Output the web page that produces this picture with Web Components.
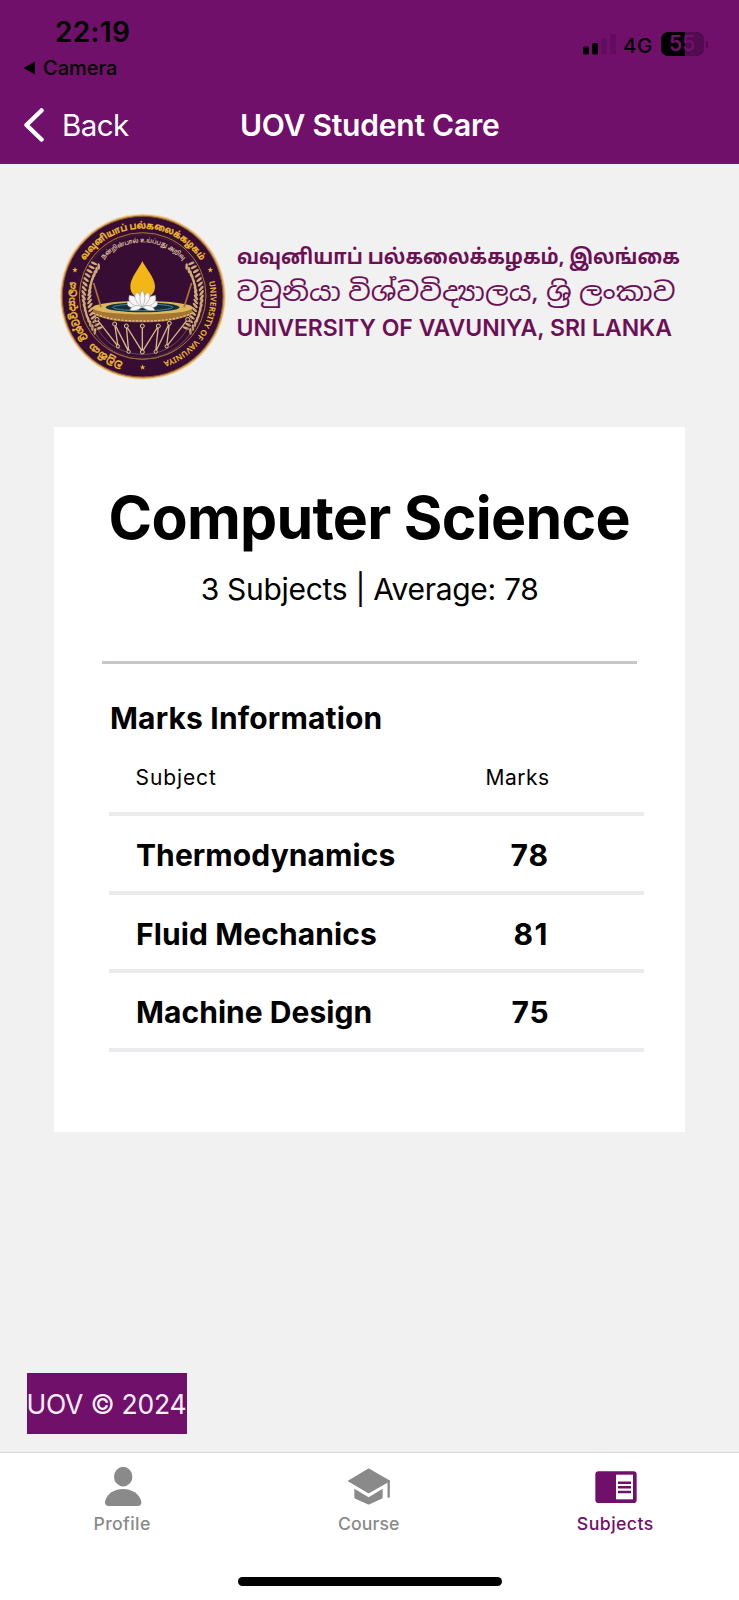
<!DOCTYPE html>
<html lang="en">
<head>
<meta charset="utf-8">
<title>UOV Student Care</title>
<style>
html,body{margin:0;padding:0}
body{background:#f1f1f1;font-family:Inter,"Liberation Sans",sans-serif;color:#000}
</style>
</head>
<body>
<app-screen>
  <app-header slot="header"></app-header>
  <uni-brand></uni-brand>
  <course-card>
    <fit-text slot="title" w="518" size="59" weight="700" lh="71">Computer Science</fit-text>
    <fit-text slot="summary" w="335.5" size="30" weight="400" lh="36">3 Subjects | Average: 78</fit-text>
    <fit-text slot="section" w="269.5" size="30" weight="700" lh="36">Marks Information</fit-text>
    <mark-row head style="height:80px">
      <fit-text w="79.5" size="21" weight="400" lh="26">Subject</fit-text>
      <fit-text slot="mark" w="62.5" size="21" weight="400" lh="26">Marks</fit-text>
    </mark-row>
    <mark-row style="height:79px">
      <fit-text w="257.5" size="30" weight="700" lh="36">Thermodynamics</fit-text>
      <fit-text slot="mark" w="36" size="30" weight="700" lh="36">78</fit-text>
    </mark-row>
    <mark-row style="height:78px">
      <fit-text w="239" size="30" weight="700" lh="36">Fluid Mechanics</fit-text>
      <fit-text slot="mark" w="31" size="30" weight="700" lh="36" style="margin-right:2px">81</fit-text>
    </mark-row>
    <mark-row style="height:79px">
      <fit-text w="233.5" size="30" weight="700" lh="36">Machine Design</fit-text>
      <fit-text slot="mark" w="35" size="30" weight="700" lh="36">75</fit-text>
    </mark-row>
  </course-card>
  <copy-badge slot="footer"><fit-text w="157" size="26.5" weight="400" lh="32">UOV © 2024</fit-text></copy-badge>
  <tab-bar slot="tabs">
    <tab-item>
      <svg slot="icon" width="42" height="42" viewBox="306 345 126 126" fill="#8a8a8a"><ellipse cx="369.500" cy="380" rx="27.500" ry="29.500"/><path d="M326 468c-8 0-12-5-11-12 4-25 29-39 54-39s51 14 55 39c1 7-3 12-11 12z"/></svg>
      <fit-text w="55.500" size="17.700" weight="500" lh="22">Profile</fit-text>
    </tab-item>
    <tab-item>
      <svg slot="icon" width="42" height="42" viewBox="86 105 126 126" fill="#8a8a8a" stroke="#8a8a8a" stroke-linejoin="round"><path stroke-width="4" d="M88 153 148 117 210 153 148 188z"/><path stroke="none" d="M105 176 148 202 190 176V202Q190 205 187 206L151 223Q148 224 145 223L108 206Q105 204 105 201z"/><path fill="none" stroke-width="7" stroke-linecap="round" d="M208 154V200"/></svg>
      <fit-text w="61" size="17.700" weight="500" lh="22">Course</fit-text>
    </tab-item>
    <tab-item active>
      <svg slot="icon" width="42" height="42" viewBox="824 107 126 126"><rect x="825" y="126" width="124" height="95" rx="10" fill="#70106b"/><path fill="#fff" d="M887 136h51v74h-51z"/><path stroke="#70106b" stroke-width="7.500" d="M893 160h39M893 174h39M893 188h39"/></svg>
      <fit-text w="76" size="17.700" weight="500" lh="22">Subjects</fit-text>
    </tab-item>
  </tab-bar>
</app-screen>
<script>
const define = (name, html, setup) => {
  const t = document.createElement('template');
  t.innerHTML = html;
  customElements.define(name, class extends HTMLElement {
    constructor() {
      super();
      this.attachShadow({mode: 'open'}).append(t.content.cloneNode(true));
    }
    connectedCallback() { if (setup) setup(this, this.shadowRoot); }
  });
};

/* Text whose tracking is chosen so the visible glyphs span a given width. */
const ctx = document.createElement('canvas').getContext('2d');
define('fit-text', `<style>:host{display:block;white-space:nowrap;flex:none}span{display:block}</style><span><slot></slot></span>`, (el, root) => {
  const a = n => +el.getAttribute(n), s = root.querySelector('span'), txt = el.textContent;
  ctx.font = `${a('weight')} ${a('size')}px Inter, "Liberation Sans", sans-serif`;
  const m = ctx.measureText(txt);
  const ink = m.actualBoundingBoxRight + m.actualBoundingBoxLeft;
  el.style.width = a('w') + 'px';
  s.style.cssText = `font:${a('weight')} ${a('size')}px/${a('lh')}px Inter,"Liberation Sans",sans-serif;letter-spacing:${(a('w') - ink) / (txt.length - 1)}px;margin-left:${m.actualBoundingBoxLeft}px`;
});

define('app-screen', `<style>
:host{display:flex;flex-direction:column;height:1600px;width:739px;overflow:hidden;background:#f1f1f1}
main{flex:1}
</style><slot name="header"></slot><main><slot></slot></main><slot name="footer"></slot><slot name="tabs"></slot>`);

define('signal-bars', `<style>:host{display:block;height:24px}svg{display:block}</style>
<svg width="33" height="24" viewBox="583 32 33 24"><rect x="583" y="46.500" width="6" height="8" rx="1.500"/><rect x="592" y="43" width="6" height="11.500" rx="1.500"/><g fill="#610c60"><rect x="601" y="38.500" width="6" height="16" rx="1.500"/><rect x="610" y="34" width="6" height="20.500" rx="1.500"/></g></svg>`);

define('battery-level', `<style>
:host{display:flex;align-items:center;gap:1.500px}
.cell{width:43px;height:24px;border-radius:7px;background:linear-gradient(90deg,#000 24px,#520a51 24px);display:flex;align-items:center;justify-content:center;color:#70106b}
.nub{width:2.500px;height:7px;border-radius:0 3px 3px 0;background:#520a51}
</style><div class="cell"><fit-text w="25" size="21" weight="600" lh="24">55</fit-text></div><div class="nub"></div>`);

define('app-header', `<style>
:host{display:block;height:164px;background:#70106b}
.status{display:flex;justify-content:space-between;height:95px;box-sizing:border-box;padding:15px 31px 0 23px}
.time{padding-left:33px}
.from{display:flex;align-items:center;gap:9px;margin-top:7px}
.radio{display:flex;align-items:center;height:24px;margin-top:17px}
.radio signal-bars{margin-right:8px}.radio fit-text{margin:3px 9px 0 0}
nav{display:grid;grid-template-columns:1fr auto 1fr;align-items:center;height:60px;padding:0 24px;color:#fff}
.back{display:flex;align-items:center;gap:20px}
.title{margin-left:2px}
svg{display:block}
</style>
<div class="status"><div><fit-text class="time" w="73" size="28" weight="600" lh="34">22:19</fit-text>
<div class="from"><svg width="12" height="14" viewBox="0 0 12 14"><path d="M.5 7 12 .5v13z"/></svg><fit-text w="72" size="20" weight="500" lh="24">Camera</fit-text></div></div>
<div class="radio"><signal-bars></signal-bars><fit-text w="28" size="20.500" weight="500" lh="24">4G</fit-text><battery-level></battery-level></div></div>
<nav><div class="back"><svg width="20" height="34" viewBox="0 0 20 34"><path fill="none" stroke="#fff" stroke-width="4.500" stroke-linecap="round" stroke-linejoin="round" d="M17.500 2.500 2.500 17l15 14.500"/></svg><fit-text w="65" size="29.500" weight="400" lh="36">Back</fit-text></div><fit-text class="title" w="257" size="30" weight="600" lh="36">UOV Student Care</fit-text></nav>`);

define('uni-emblem', `<style>:host{display:block;flex:none}svg{display:block}text{font-family:"Noto Sans Tamil","Noto Sans Sinhala",Inter,"Noto Sans",sans-serif}</style>
<svg width="168" height="167" viewBox="27 24 504 501">
<defs><path id="outer" d="M278 479a204 204 0 0 1 0-408a204 204 0 0 1 0 408"/><path id="inner" d="M278 438a163 163 0 0 1 0-326a163 163 0 0 1 0 326"/></defs>
<circle cx="278.500" cy="275" r="249" fill="#f0d6ac"/><circle cx="278.500" cy="275" r="246" fill="#d9a258"/><circle cx="278" cy="275" r="241" fill="#380d33" stroke="#8a5a2b" stroke-width="3"/>
<circle cx="278" cy="273" r="190" fill="none" stroke="#ad7b31" stroke-width="3"/>
<circle cx="278" cy="273" r="184" fill="none" stroke="#4f2636" stroke-width="2"/>
<g fill="#eebb2e" stroke="#eebb2e" stroke-width=".8" font-weight="700">
<text font-size="30"><textPath href="#outer" startOffset="59" textLength="110" lengthAdjust="spacingAndGlyphs">වවුනියා</textPath></text>
<text font-size="30"><textPath href="#outer" startOffset="188" textLength="176" lengthAdjust="spacingAndGlyphs">විශ්වවිද්‍යාලය</textPath></text>
<text font-size="28"><textPath href="#outer" startOffset="434" textLength="414" lengthAdjust="spacingAndGlyphs">வவுனியாப் பல்கலைக்கழகம்</textPath></text>
<text font-size="24" font-weight="600" stroke-width=".3"><textPath href="#outer" startOffset="915" textLength="304" lengthAdjust="spacingAndGlyphs">UNIVERSITY OF VAVUNIYA</textPath></text></g>
<text font-size="19" font-weight="600" fill="#e3cfa4"><textPath href="#inner" startOffset="380" textLength="268" lengthAdjust="spacingAndGlyphs">நன்றின்பால் உய்ப்பது அறிவு</textPath></text>
<g id="stars" fill="#f0b52c"></g><g id="laurel" fill="#cfae76"></g>
<g fill="none" stroke="#8a6a50" stroke-width="2"><path d="M130 340C150 405 205 447 277 448S405 405 425 340"/><path d="M120 352C145 420 205 462 277 462S412 420 437 352"/></g>
<path d="M129 307v20c35 20 90 25 148 25s113-5 150-25v-20z" fill="#a77532"/><path d="M129 324c40 19 90 24 148 24s110-5 150-24" fill="none" stroke="#dfc28b" stroke-width="4" stroke-dasharray="7 4"/>
<ellipse cx="278" cy="308" rx="150" ry="20" fill="#ddb85f"/><ellipse cx="278" cy="307" rx="111" ry="15" fill="#132f40"/><ellipse cx="278" cy="307" rx="90" ry="10" fill="none" stroke="#4d8791" stroke-width="3"/>
<path d="M131 234 153 307M425 234 402 307" stroke="#a87536" stroke-width="5"/>
<path d="M277 168C269 188 241 218 241 244C241 269 257 279 277 279S315 269 315 244C315 218 286 188 277 168Z" fill="#f2b616"/>
<g fill="#f8f7f5" stroke="#8c8d91" stroke-width="1.500"><path d="M277 307Q224 315 232 289Q258 284 277 307Q297 284 322 289Q330 315 277 307"/><path d="M277 308Q228 300 238 271Q267 272 277 308Q288 272 316 271Q326 300 277 308"/><path d="M277 308Q243 281 260 262Q272 267 277 293Q283 267 294 262Q311 281 277 308"/><path d="M277 254Q262 278 277 307Q292 278 277 254"/><path d="M277 307Q254 292 239 315Q258 321 277 307Q299 292 315 315Q296 321 277 307"/></g>
<g fill="none" stroke="#d9b982" stroke-width="4"><path d="M141 343 204 424 194 357 236 440 229 363 277 440 277 363V440L325 363 317 440 358 355 350 424 413 343"/></g>
<g fill="#3b2432" stroke="#e2c688" stroke-width="3"><circle cx="141" cy="343" r="6"/><circle cx="194" cy="357" r="6"/><circle cx="229" cy="363" r="6"/><circle cx="277" cy="363" r="6"/><circle cx="325" cy="363" r="6"/><circle cx="358" cy="355" r="6"/><circle cx="413" cy="343" r="6"/><circle cx="204" cy="424" r="5"/><circle cx="236" cy="440" r="5"/><circle cx="277" cy="441" r="6"/><circle cx="317" cy="440" r="5"/><circle cx="350" cy="424" r="5"/></g>
</svg>`, (el, root) => {
  const star = (x, y) => '<path d="' + [...Array(10)].map((_, i) => {
    const r = i % 2 ? 3.5 : 9, t = -Math.PI / 2 + i * Math.PI / 5;
    return (i ? 'L' : 'M') + (x + r * Math.cos(t)).toFixed(1) + ' ' + (y + r * Math.sin(t)).toFixed(1);
  }).join('') + 'z"/>';
  root.querySelector('#stars').innerHTML = star(75, 195) + star(481, 195) + star(278, 487);
  let s = '';
  for (let i = 0; i < 17; i++) {
    const d = 54 + i * 4.4, t = d * Math.PI / 180;
    for (const k of [-1, 1]) for (const [r, tilt] of [[177, -32], [160, 32]]) {
      const x = 278 + k * r * Math.sin(t), y = 275 + r * Math.cos(t);
      s += `<ellipse cx="${x.toFixed(1)}" cy="${y.toFixed(1)}" rx="3.800" ry="10" transform="rotate(${-k * (90 - d + tilt)} ${x.toFixed(1)} ${y.toFixed(1)})"/>`;
    }
  }
  root.querySelector('#laurel').innerHTML = s;
});

define('uni-brand', `<style>:host{display:flex;padding:49px 0 0 58.500px;height:167px}svg{display:block;overflow:visible}text{font-family:"Noto Sans Tamil","Noto Sans Sinhala","Noto Sans",sans-serif}</style>
<uni-emblem></uni-emblem>
<svg width="500" height="167" viewBox="226.500 213 500 167" fill="#6c1056">
<text x="236.500" y="264" font-size="21" font-weight="700" textLength="443" lengthAdjust="spacingAndGlyphs">வவுனியாப் பல்கலைக்கழகம், இலங்கை</text>
<text x="236" y="300.500" font-size="25.500" textLength="439" lengthAdjust="spacingAndGlyphs">වවුනියා විශ්වවිද්‍යාලය, ශ්‍රි ලංකාව</text>
<text x="236" y="336" font-size="23" font-weight="600" textLength="435.500" style="font-family:Inter,sans-serif">UNIVERSITY OF VAVUNIYA, SRI LANKA</text></svg>`);

define('course-card', `<style>
:host{display:block;box-sizing:border-box;width:631px;height:705px;margin:47px 0 0 54px;padding:55px 0 0;background:#fff}
.top{display:flex;flex-direction:column;align-items:center;gap:18px}
.rule{height:3px;width:535px;margin:54px 0 36px 48px;background:#c6c5cc}
.sec{padding-left:57px}
.rows{margin-left:55px;width:535px}
</style><div class="top"><slot name="title"></slot><slot name="summary"></slot></div><div class="rule"></div><div class="sec"><slot name="section"></slot></div><div class="rows"><slot></slot></div>`);

define('mark-row', `<style>
:host{display:flex;align-items:center;justify-content:space-between;box-sizing:border-box;padding:3px 96.500px 0 28px;border-bottom:4px solid #ebebee}
:host([head]){padding:7px 95px 0 27.500px}
</style><slot></slot><slot name="mark"></slot>`);

define('copy-badge', `<style>:host{display:flex;align-items:center;justify-content:center;width:160px;height:61px;margin:0 0 18px 27px;background:#70106b;color:#fbeffa}</style><slot></slot>`);

define('tab-item', `<style>:host{display:flex;flex-direction:column;align-items:center;color:#8a8a8a}:host([active]){color:#70106b}.label{margin:6px 2px 0 0}</style><slot name="icon"></slot><div class="label"><slot></slot></div>`);

define('tab-bar', `<style>
:host{display:flex;flex-direction:column;justify-content:space-between;align-items:center;box-sizing:border-box;height:148px;background:#fff;border-top:1px solid #d8d8d8;padding-bottom:14px}
.tabs{display:grid;grid-template-columns:repeat(3,1fr);width:100%;padding-top:12px;box-sizing:border-box}
.home{width:264px;height:9px;border-radius:5px;background:#000}
</style><div class="tabs"><slot></slot></div><div class="home"></div>`);
</script>
</body>
</html>
